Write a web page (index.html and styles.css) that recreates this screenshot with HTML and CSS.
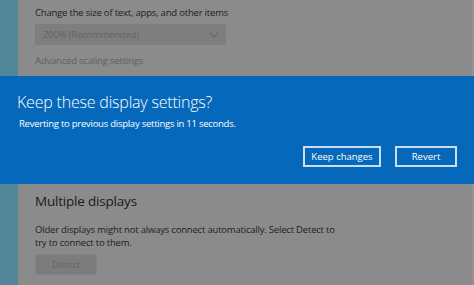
FILE: index.html
```html
<!DOCTYPE html>
<html>
<head>
<meta charset="utf-8">
<link rel="stylesheet" href="styles.css">
</head>
<body>
<div class="page">
  <div class="rail"></div>
  <main class="content">
    <section class="scale">
      <div class="label">Change the size of text, apps, and other items</div>
      <div class="select">
        <span>200% (Recommended)</span>
        <svg class="chev" width="10" height="6" viewBox="0 0 10 6"><path d="M0.5 0.5 L5 5 L9.5 0.5" fill="none" stroke="#656565" stroke-width="1.1"/></svg>
      </div>
      <div class="link">Advanced scaling settings</div>
    </section>
    <section class="multi">
      <h2 class="heading">Multiple displays</h2>
      <p class="para">Older displays might not always connect automatically. Select Detect to try to connect to them.</p>
      <div class="detect">Detect</div>
    </section>
  </main>
  <div class="dialog">
    <h1 class="title">Keep these display settings?</h1>
    <p class="sub">Reverting to previous display settings in 11 seconds.</p>
    <div class="actions">
      <button class="btn keep">Keep changes</button>
      <button class="btn revert">Revert</button>
    </div>
  </div>
</div>
</body>
</html>
```
FILE: styles.css
```css
html, body {
  margin: 0;
  padding: 0;
}
body {
  width: 474px;
  height: 285px;
  overflow: hidden;
  background: #8b8b8b;
  font-family: "Open Sans", "Noto Sans", sans-serif;
}
.page {
  position: relative;
  display: flex;
  width: 474px;
  height: 285px;
}
.rail {
  width: 18px;
  background: #52879a;
  flex: none;
}
.content {
  flex: 1;
  padding-left: 17px;
  display: flex;
  flex-direction: column;
  border-right: 2px solid #929292;
}
.scale {
  padding-top: 6px;
}
.label {
  font-size: 9.5px;
  line-height: 14px;
  color: #1e1e1e;
  letter-spacing: -0.2px;
}
.select {
  margin-top: 4px;
  width: 191px;
  height: 21px;
  box-sizing: border-box;
  background: #7e7e7e;
  display: flex;
  align-items: center;
  justify-content: space-between;
  padding: 0 7px 0 8px;
  font-size: 9.5px;
  letter-spacing: -0.2px;
  color: #636363;
}
.link {
  margin-top: 9px;
  font-size: 9.5px;
  line-height: 14px;
  color: #606060;
  letter-spacing: -0.2px;
}
.multi {
  margin-top: 124px;
}
.heading {
  margin: 0;
  font-weight: 400;
  font-size: 13.5px;
  line-height: 18px;
  color: #1c1c1c;
  letter-spacing: -0.2px;
}
.para {
  margin: 13px 0 0;
  width: 312px;
  font-size: 9.5px;
  line-height: 13px;
  color: #1e1e1e;
  letter-spacing: -0.2px;
}
.detect {
  margin-top: 5px;
  width: 62px;
  height: 21px;
  box-sizing: border-box;
  border: 1px solid #848484;
  background: #7c7c7c;
  color: #666666;
  font-size: 9.5px;
  letter-spacing: -0.1px;
  display: flex;
  align-items: center;
  justify-content: center;
}
.dialog {
  position: absolute;
  left: 0;
  top: 76px;
  width: 474px;
  height: 108px;
  box-sizing: border-box;
  background: #0568bb;
  padding: 15px 17px 0 17px;
  color: #fff;
}
.title {
  margin: 0;
  font-weight: 300;
  font-size: 16px;
  line-height: 22px;
  letter-spacing: -0.2px;
}
.sub {
  margin: 4px 0 0 2px;
  font-size: 9.5px;
  line-height: 14px;
  letter-spacing: -0.25px;
}
.actions {
  display: flex;
  justify-content: flex-end;
  gap: 14px;
  margin-top: 15px;
}
.btn {
  height: 21px;
  box-sizing: border-box;
  border: 2px solid #c9def2;
  background: #0568bb;
  color: #fff;
  font-family: "Open Sans", "Noto Sans", sans-serif;
  font-size: 9.5px;
  padding: 0;
  margin: 0;
}
.keep {
  width: 78px;
}
.revert {
  width: 62px;
}
```
